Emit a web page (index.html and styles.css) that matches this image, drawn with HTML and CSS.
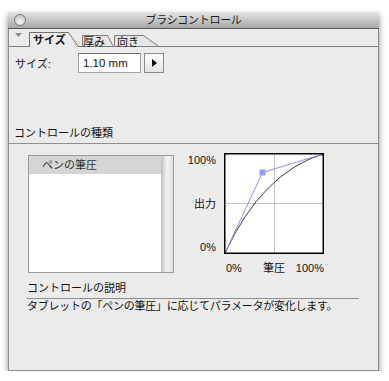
FILE: index.html
```html
<!DOCTYPE html>
<html>

<head>
    <meta charset="utf-8">
    <title>ブラシコントロール</title>
    <link rel="stylesheet" href="styles.css">
</head>

<body>
    <div class="palette">
        <div class="titlebar">
            <span class="close-btn"></span>
            <span class="title">ブラシコントロール</span>
            <span></span>
        </div>

        <div class="tabbar">
            <svg class="collapse" width="7" height="4" viewBox="0 0 7 4">
                <path d="M0 0 H7 L3.5 4 Z" fill="#8c8c8c" />
            </svg>
            <div class="tab tab-size active">
                <svg class="tab-shape" width="50" height="15" viewBox="0 0 50 15">
                    <path d="M0.5 15 V0.5 H39.5 L49.5 15" fill="#ebebeb" stroke="#6f6f6f" />
                </svg>
                <span>サイズ</span>
            </div>
            <div class="tab tab-thick">
                <svg class="tab-shape" width="31" height="11" viewBox="0 0 31 11">
                    <path d="M0.5 11 V0.5 H25.5 L31 11" fill="#e6e6e6" stroke="#7a7a7a" />
                </svg>
                <span>厚み</span>
            </div>
            <div class="tab tab-dir">
                <svg class="tab-shape" width="44" height="11" viewBox="0 0 44 11">
                    <path d="M0.5 11 V0.5 H29.5 L44 11" fill="#e6e6e6" stroke="#7a7a7a" />
                </svg>
                <span>向き</span>
            </div>
        </div>

        <div class="size-row">
            <span class="size-label">サイズ:</span>
            <div class="field">1.10 mm</div>
            <button class="stepper">
                <svg width="5" height="8" viewBox="0 0 5 8">
                    <path d="M0 0 L5 4 L0 8 Z" fill="#000" />
                </svg>
            </button>
        </div>

        <div class="section-head">コントロールの種類</div>

        <div class="control-area">
            <div class="listbox">
                <div class="list-items">
                    <div class="list-item selected">ペンの筆圧</div>
                </div>
                <div class="scrollbar"></div>
            </div>

            <div class="chart">
                <div class="y-labels">
                    <span>100%</span>
                    <span>出力</span>
                    <span>0%</span>
                </div>
                <svg class="plot" width="100" height="101" viewBox="0 0 100 101">
                    <rect x="0" y="0" width="100" height="101" fill="#fff" />
                    <path d="M50.5 1 V100 M1 50.5 H99" stroke="#c2c2c2" stroke-width="1" />
                    <path d="M1 100 Q38 20 99 1" fill="none" stroke="#3c3c3c" stroke-width="1" />
                    <path d="M1 100 L38.5 19.5 L99 1" fill="none" stroke="#8d8dff" stroke-width="1" />
                    <rect x="35.5" y="16.5" width="6" height="6" fill="#9a9af6" />
                    <rect x="97" y="0" width="3" height="3" fill="#8d8dff" />
                    <rect x="0.75" y="0.75" width="98.5" height="99.5" fill="none" stroke="#000" stroke-width="1.5" />
                </svg>
                <div class="x-labels">
                    <span class="x-start">0%</span>
                    <span>筆圧</span>
                    <span class="x-end">100%</span>
                </div>
            </div>
        </div>

        <div class="description">
            <div class="desc-head">コントロールの説明</div>
            <p class="desc-text">タブレットの「ペンの筆圧」に応じてパラメータが変化します。</p>
        </div>
    </div>
</body>

</html>
```

FILE: styles.css
```css
body {
    margin: 0;
    padding: 12px 0 0 8px;
    background: #fff;
    font-family: "Liberation Sans", "Noto Sans CJK JP", sans-serif;
    font-size: 11px;
    color: #111;
}

.palette {
    width: 371px;
    height: 359px;
    box-sizing: border-box;
    background: #ebebeb;
    border: 1px solid #8c8c8c;
    border-top: 0;
    box-shadow: 0 3px 6px rgba(0, 0, 0, 0.45);
    display: flex;
    flex-direction: column;
}

/* title bar */

.titlebar {
    height: 16px;
    margin: 0 -1px;
    border-bottom: 1px solid #555;
    background: linear-gradient(#e4e4e4, #a8a8a8);
    display: grid;
    grid-template-columns: 1fr auto 1fr;
    align-items: center;
}

.close-btn {
    width: 10px;
    height: 10px;
    margin-left: 6px;
    border-radius: 50%;
    border: 1px solid #7c7c7c;
    background: radial-gradient(circle at 50% 70%, #f6f6f6, #b9b9b9);
}

.title {
    line-height: 16px;
    letter-spacing: -0.3px;
    color: #1c1c1c;
}

/* tabs */

.tabbar {
    height: 17px;
    border-bottom: 1px solid #7c7c7c;
    display: flex;
    align-items: flex-end;
}

.collapse {
    margin: 0 7px 9px 6px;
}

.tab {
    position: relative;
    display: flex;
    align-items: center;
    line-height: 12px;
}

.tab-shape {
    position: absolute;
    left: 0;
    top: 0;
}

.tab span {
    position: relative;
}

.tab-size {
    width: 50px;
    height: 15px;
    margin-bottom: -1px;
    z-index: 1;
}

.tab-size span {
    padding-left: 4px;
    font-weight: bold;
}

.tab-thick {
    width: 31px;
    height: 11px;
    margin-left: 3px;
}

.tab-thick span,
.tab-dir span {
    padding-left: 1px;
    padding-top: 2px;
}

.tab-dir {
    width: 44px;
    height: 11px;
    margin-left: 1px;
}

.tab-dir span {
    padding-left: 3px;
}

/* size row */

.size-row {
    margin-top: 6px;
    height: 20px;
    display: flex;
    align-items: center;
}

.size-label {
    width: 63px;
    padding-left: 6px;
}

.field {
    width: 63px;
    height: 20px;
    box-sizing: border-box;
    border: 1px solid #a3a3a3;
    border-top-color: #707070;
    background: #fff;
    padding-left: 4px;
    font-size: 11.5px;
    line-height: 18px;
}

.stepper {
    width: 20px;
    height: 20px;
    margin-left: 3px;
    padding: 0;
    border: 1px solid #8a8a8a;
    background: linear-gradient(#fdfdfd, #e4e4e4);
    display: flex;
    align-items: center;
    justify-content: center;
}

/* sections */

.section-head {
    margin-top: 53px;
    padding: 0 0 3px 5px;
    line-height: 14px;
    border-bottom: 1px solid #8e8e8e;
}

.control-area {
    margin-top: 9px;
    display: flex;
    align-items: flex-start;
}

.listbox {
    width: 146px;
    height: 118px;
    box-sizing: border-box;
    margin: 2px 0 0 19px;
    border: 1px solid #9c9c9c;
    background: #fff;
    display: flex;
}

.list-items {
    flex: 1;
}

.list-item {
    height: 18px;
    line-height: 18px;
    padding-left: 13px;
    color: #333;
}

.list-item.selected {
    background: #d5d5d5;
}

.scrollbar {
    width: 12px;
    background: linear-gradient(to right, #bdbdbd, #ececec 40%, #f2f2f2 60%, #dedede);
}

.chart {
    margin-left: 6px;
    display: grid;
    grid-template-columns: 36px 100px;
    column-gap: 8px;
    row-gap: 7px;
}

.y-labels {
    height: 101px;
    display: flex;
    flex-direction: column;
    justify-content: space-between;
    align-items: flex-end;
    line-height: 14px;
}

.plot {
    display: block;
}

.x-labels {
    grid-column: 2;
    display: grid;
    grid-template-columns: 1fr auto 1fr;
    line-height: 14px;
}

.x-start {
    padding-left: 2px;
}

.x-end {
    justify-self: end;
}

.description {
    margin: 6px 19px 0 18px;
}

.desc-head {
    line-height: 14px;
    padding-bottom: 3px;
    border-bottom: 1px solid #8e8e8e;
}

.desc-text {
    margin: 0;
    line-height: 14px;
    letter-spacing: -0.25px;
}
```
